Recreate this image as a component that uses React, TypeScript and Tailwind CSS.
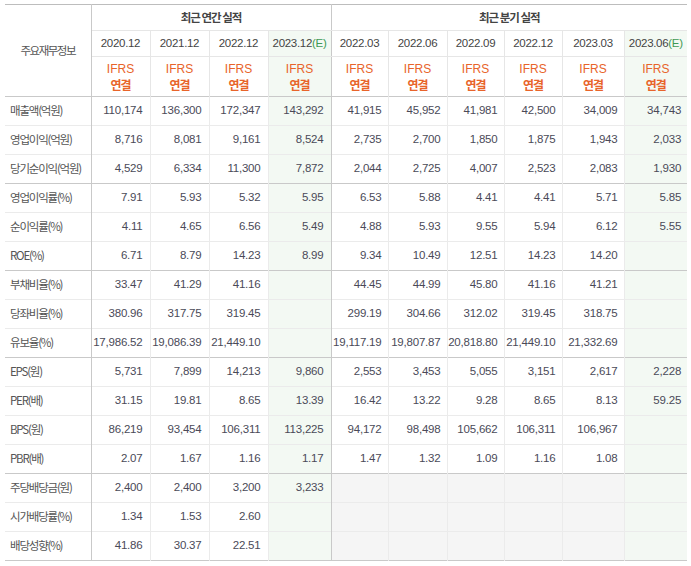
import React from 'react'

// 주요재무정보 table: annual (4 cols, last is estimate) + quarterly (6 cols, last is estimate)
const annualDates = ['2020.12', '2021.12', '2022.12', '2023.12']
const quarterDates = ['2022.03', '2022.06', '2022.09', '2022.12', '2023.03', '2023.06']

type Row = { label: string; annual: string[]; quarter: string[] | null; groupEnd?: boolean }

const rows: Row[] = [
  { label: '매출액(억원)', annual: ['110,174', '136,300', '172,347', '143,292'], quarter: ['41,915', '45,952', '41,981', '42,500', '34,009', '34,743'] },
  { label: '영업이익(억원)', annual: ['8,716', '8,081', '9,161', '8,524'], quarter: ['2,735', '2,700', '1,850', '1,875', '1,943', '2,033'] },
  { label: '당기순이익(억원)', annual: ['4,529', '6,334', '11,300', '7,872'], quarter: ['2,044', '2,725', '4,007', '2,523', '2,083', '1,930'], groupEnd: true },
  { label: '영업이익률(%)', annual: ['7.91', '5.93', '5.32', '5.95'], quarter: ['6.53', '5.88', '4.41', '4.41', '5.71', '5.85'] },
  { label: '순이익률(%)', annual: ['4.11', '4.65', '6.56', '5.49'], quarter: ['4.88', '5.93', '9.55', '5.94', '6.12', '5.55'] },
  { label: 'ROE(%)', annual: ['6.71', '8.79', '14.23', '8.99'], quarter: ['9.34', '10.49', '12.51', '14.23', '14.20', ''], groupEnd: true },
  { label: '부채비율(%)', annual: ['33.47', '41.29', '41.16', ''], quarter: ['44.45', '44.99', '45.80', '41.16', '41.21', ''] },
  { label: '당좌비율(%)', annual: ['380.96', '317.75', '319.45', ''], quarter: ['299.19', '304.66', '312.02', '319.45', '318.75', ''] },
  { label: '유보율(%)', annual: ['17,986.52', '19,086.39', '21,449.10', ''], quarter: ['19,117.19', '19,807.87', '20,818.80', '21,449.10', '21,332.69', ''], groupEnd: true },
  { label: 'EPS(원)', annual: ['5,731', '7,899', '14,213', '9,860'], quarter: ['2,553', '3,453', '5,055', '3,151', '2,617', '2,228'] },
  { label: 'PER(배)', annual: ['31.15', '19.81', '8.65', '13.39'], quarter: ['16.42', '13.22', '9.28', '8.65', '8.13', '59.25'] },
  { label: 'BPS(원)', annual: ['86,219', '93,454', '106,311', '113,225'], quarter: ['94,172', '98,498', '105,662', '106,311', '106,967', ''] },
  { label: 'PBR(배)', annual: ['2.07', '1.67', '1.16', '1.17'], quarter: ['1.47', '1.32', '1.09', '1.16', '1.08', ''], groupEnd: true },
  { label: '주당배당금(원)', annual: ['2,400', '2,400', '3,200', '3,233'], quarter: null },
  { label: '시가배당률(%)', annual: ['1.34', '1.53', '2.60', ''], quarter: null },
  { label: '배당성향(%)', annual: ['41.86', '30.37', '22.51', ''], quarter: null },
]

const colWidths = [86, 59, 59, 59, 63, 57, 59, 57, 58, 62, 63]

function DateCell({ date, estimate, last }: { date: string; estimate?: boolean; last?: boolean }) {
  return (
    <th
      className={`h-[26px] p-0 font-normal text-[11.5px] tracking-[-0.3px] text-[#444] text-center border-b border-[#e6e6e6] ${
        estimate ? 'bg-[#f3f9f3]' : ''
      } ${last ? 'border-r border-r-[#c9c9c9]' : estimate ? '' : 'border-r border-r-[#e6e6e6]'}`}
    >
      {date}
      {estimate && <span className="text-[#3f9a55]">(E)</span>}
    </th>
  )
}

function IfrsCell({ estimate, last }: { estimate?: boolean; last?: boolean }) {
  return (
    <th
      className={`h-[40px] p-0 pt-[1px] font-normal text-[12px] leading-[16px] text-[#e8642a] text-center ${
        estimate ? 'bg-[#f3f9f3]' : ''
      } ${last ? 'border-r border-r-[#c9c9c9]' : estimate ? '' : 'border-r border-r-[#e6e6e6]'}`}
    >
      <div>IFRS</div>
      <div className="font-kr font-bold tracking-[-1px]">연결</div>
    </th>
  )
}

export default function App() {
  return (
    <div className="pt-[4px] pl-[5px] bg-white min-h-screen">
      <style>{`.font-kr{font-family:"Noto Sans CJK KR","Liberation Sans",sans-serif;}`}</style>
      <table
        className="table-fixed border-collapse border-t border-[#bdbdbd]"
        style={{ width: 681, fontFamily: '"Liberation Sans", "Noto Sans CJK KR", sans-serif' }}
      >
        <colgroup>
          {colWidths.map((w, i) => (
            <col key={i} style={{ width: w }} />
          ))}
        </colgroup>
        <thead>
          <tr>
            <th
              rowSpan={3}
              className="p-0 font-normal font-kr text-[11.5px] tracking-[-1.5px] text-[#555] text-center border-r border-[#c9c9c9] border-b border-b-[#c9c9c9]"
            >
              주요재무정보
            </th>
            <th
              colSpan={4}
              className="h-[26px] p-0 font-kr font-bold text-[11.5px] tracking-[-1px] text-[#444] text-center border-r border-[#c9c9c9] border-b border-b-[#e6e6e6]"
            >
              최근 연간 실적
            </th>
            <th
              colSpan={6}
              className="h-[26px] p-0 font-kr font-bold text-[11.5px] tracking-[-1px] text-[#444] text-center border-b border-[#e6e6e6]"
            >
              최근 분기 실적
            </th>
          </tr>
          <tr>
            {annualDates.map((d, i) => (
              <DateCell key={d} date={d} estimate={i === 3} last={i === 3} />
            ))}
            {quarterDates.map((d, i) => (
              <DateCell key={d} date={d} estimate={i === 5} />
            ))}
          </tr>
          <tr className="border-b border-[#c9c9c9]">
            {annualDates.map((d, i) => (
              <IfrsCell key={d} estimate={i === 3} last={i === 3} />
            ))}
            {quarterDates.map((d, i) => (
              <IfrsCell key={d} estimate={i === 5} />
            ))}
          </tr>
        </thead>
        <tbody>
          {rows.map((r, ri) => {
            const lastRow = ri === rows.length - 1
            const bottom = r.groupEnd || lastRow ? 'border-b border-[#c9c9c9]' : 'border-b border-[#ebebeb]'
            return (
              <tr key={r.label} className={bottom}>
                <td className="h-[29px] p-0 pl-[5px] font-kr text-[11.5px] tracking-[-1.2px] text-[#555] border-r border-[#c9c9c9] whitespace-nowrap">
                  {r.label}
                </td>
                {r.annual.map((v, i) => (
                  <td
                    key={i}
                    className={`h-[29px] p-0 pr-[7px] text-right text-[11.5px] tracking-[-0.2px] text-[#4a4a58] whitespace-nowrap ${
                      i === 3 ? 'bg-[#f3f9f3] border-r border-[#c9c9c9]' : 'border-r border-[#ebebeb]'
                    }`}
                  >
                    {v}
                  </td>
                ))}
                {r.quarter
                  ? r.quarter.map((v, i) => (
                      <td
                        key={i}
                        className={`h-[29px] p-0 pr-[6px] text-right text-[11.5px] tracking-[-0.2px] text-[#4a4a58] whitespace-nowrap ${
                          i === 5 ? 'bg-[#f3f9f3]' : 'border-r border-[#ebebeb]'
                        }`}
                      >
                        {v}
                      </td>
                    ))
                  : quarterDates.map((d, i) => (
                      <td
                        key={d}
                        className={`h-[29px] p-0 ${i === 5 ? 'bg-[#f3f8f3]' : 'bg-[#f5f5f5] border-r border-[#ebebeb]'}`}
                      />
                    ))}
              </tr>
            )
          })}
        </tbody>
      </table>
    </div>
  )
}
